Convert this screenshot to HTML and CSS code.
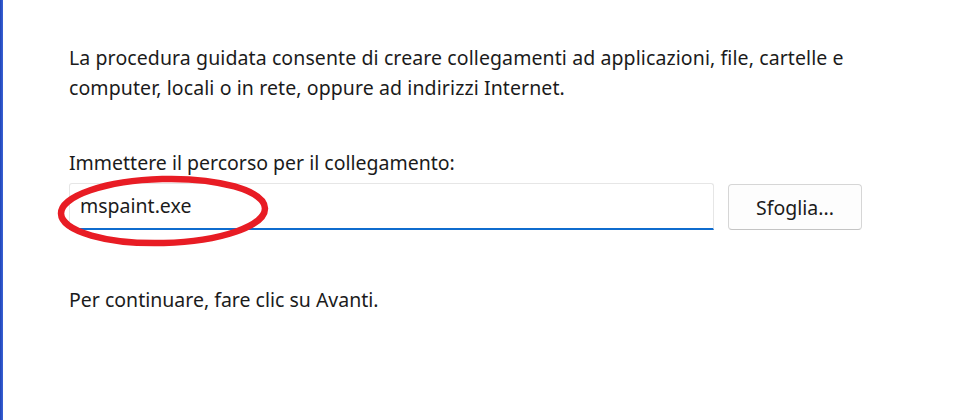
FILE: index.html
```html
<!DOCTYPE html>
<html lang="it">
<head>
<meta charset="utf-8">
<link rel="stylesheet" href="styles.css">
</head>
<body>
<div class="window">
  <div class="edge"></div>
  <main class="content">
    <p class="intro">La procedura guidata consente di creare collegamenti ad applicazioni, file, cartelle e computer, locali o in rete, oppure ad indirizzi Internet.</p>
    <label class="label" for="path">Immettere il percorso per il collegamento:</label>
    <div class="row">
      <div class="field">
        <span class="value" id="path">mspaint.exe</span>
        <svg class="circle" width="230" height="80" viewBox="0 0 230 80" aria-hidden="true">
          <ellipse cx="116" cy="42" rx="102" ry="32" fill="none" stroke="#e81c24" stroke-width="6.5" transform="rotate(-1.5 116 42)"/>
        </svg>
      </div>
      <button class="browse">Sfoglia...</button>
    </div>
    <p class="next">Per continuare, fare clic su Avanti.</p>
  </main>
</div>
</body>
</html>
```
FILE: styles.css
```css
html, body {
  margin: 0;
  padding: 0;
  background: #ffffff;
}
body {
  width: 980px;
  height: 420px;
  overflow: hidden;
  font-family: "Noto Sans", "Open Sans", sans-serif;
  font-size: 19.5px;
  color: #1b1b1b;
}
.window {
  display: flex;
  height: 420px;
}
.edge {
  width: 3px;
  flex: none;
  background: linear-gradient(to right, #1f44b8, #3b63d6);
}
.content {
  padding: 43px 0 0 66px;
  flex: 1;
}
.intro {
  margin: 0;
  width: 820px;
  line-height: 30px;
  letter-spacing: 0.1px;
}
.label {
  display: block;
  margin-top: 48px;
  line-height: 24px;
}
.row {
  display: flex;
  align-items: flex-start;
  gap: 14px;
  margin-top: 8px;
}
.field {
  position: relative;
  box-sizing: border-box;
  width: 645px;
  height: 47px;
  border: 1px solid #e6e6e6;
  border-bottom: 2px solid #0f6cce;
  border-radius: 3px 3px 0 0;
  padding: 0 10px;
  display: flex;
  align-items: center;
}
.value {
  color: #1b1b1b;
  margin-top: -2px;
}
.circle {
  position: absolute;
  left: -23px;
  top: -15px;
}
.browse {
  box-sizing: border-box;
  width: 134px;
  height: 46px;
  margin-top: 1px;
  background: #fdfdfd;
  border: 1px solid #d6d6d6;
  border-bottom-color: #c4c4c4;
  border-radius: 4px;
  font: inherit;
  color: #1b1b1b;
}
.next {
  margin: 58px 0 0;
  line-height: 24px;
}
```
